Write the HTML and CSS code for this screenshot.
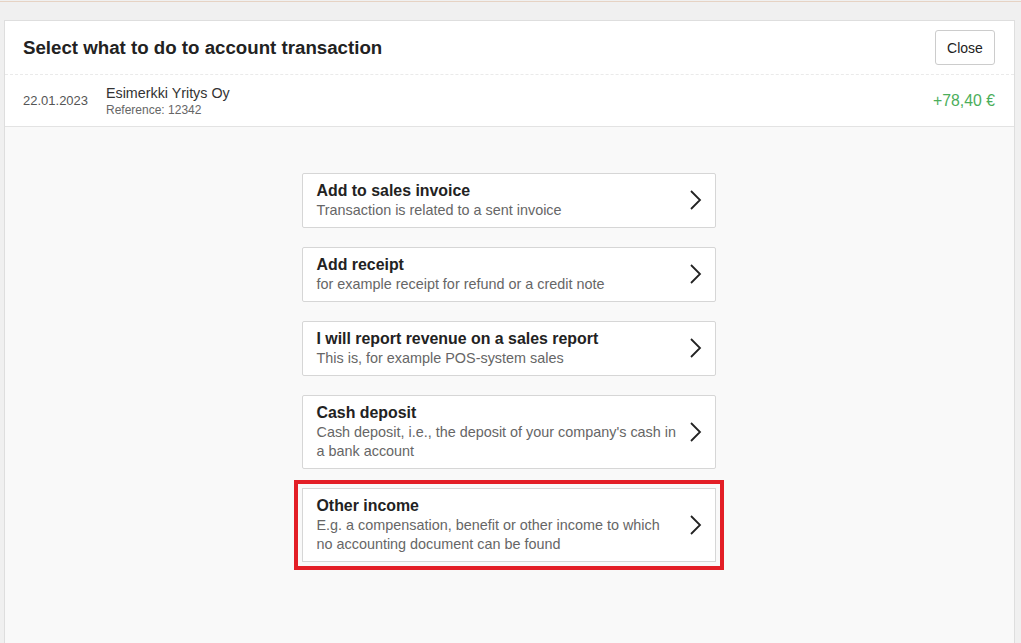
FILE: index.html
```html
<!DOCTYPE html>
<html lang="en">
<head>
    <meta charset="UTF-8">
    <title>Select what to do to account transaction</title>
    <meta name="viewport" content="width=device-width, initial-scale=1">
    <link rel="stylesheet" href="styles.css">
</head>
<body>
    <div class="topline"></div>
    <div class="modal">
        <div class="modal-header">
            <h1>Select what to do to account transaction</h1>
            <button class="close-btn">Close</button>
        </div>
        <div class="transaction">
            <div class="tx-date">22.01.2023</div>
            <div class="tx-info">
                <div class="tx-name">Esimerkki Yritys Oy</div>
                <div class="tx-ref">Reference: 12342</div>
            </div>
            <div class="tx-amount">+78,40 €</div>
        </div>
        <div class="modal-body">
            <div class="options">
                <a class="option" href="#">
                    <div class="option-text">
                        <div class="option-title">Add to sales invoice</div>
                        <div class="option-desc">Transaction is related to a sent invoice</div>
                    </div>
                    <svg class="chevron" width="14" height="22" viewBox="0 0 14 22"><path d="M2 2 L11 11 L2 20" fill="none" stroke="#222" stroke-width="1.8"/></svg>
                </a>
                <a class="option" href="#">
                    <div class="option-text">
                        <div class="option-title">Add receipt</div>
                        <div class="option-desc">for example receipt for refund or a credit note</div>
                    </div>
                    <svg class="chevron" width="14" height="22" viewBox="0 0 14 22"><path d="M2 2 L11 11 L2 20" fill="none" stroke="#222" stroke-width="1.8"/></svg>
                </a>
                <a class="option" href="#">
                    <div class="option-text">
                        <div class="option-title">I will report revenue on a sales report</div>
                        <div class="option-desc">This is, for example POS-system sales</div>
                    </div>
                    <svg class="chevron" width="14" height="22" viewBox="0 0 14 22"><path d="M2 2 L11 11 L2 20" fill="none" stroke="#222" stroke-width="1.8"/></svg>
                </a>
                <a class="option" href="#">
                    <div class="option-text">
                        <div class="option-title">Cash deposit</div>
                        <div class="option-desc">Cash deposit, i.e., the deposit of your company's cash in a bank account</div>
                    </div>
                    <svg class="chevron" width="14" height="22" viewBox="0 0 14 22"><path d="M2 2 L11 11 L2 20" fill="none" stroke="#222" stroke-width="1.8"/></svg>
                </a>
                <a class="option highlighted" href="#">
                    <div class="option-text">
                        <div class="option-title">Other income</div>
                        <div class="option-desc">E.g. a compensation, benefit or other income to which no accounting document can be found</div>
                    </div>
                    <svg class="chevron" width="14" height="22" viewBox="0 0 14 22"><path d="M2 2 L11 11 L2 20" fill="none" stroke="#222" stroke-width="1.8"/></svg>
                </a>
            </div>
        </div>
    </div>
</body>
</html>
```
FILE: styles.css
```css
body {
    font-family: "Liberation Sans", Arial, sans-serif;
    margin: 0;
    background: #f0f0f0;
    color: #222;
    height: 643px;
    overflow: hidden;
}

.topline {
    height: 1px;
    margin-top: 1px;
    background: #e6d3c4;
}

.modal {
    margin: 18px 6px 0 4px;
    background: #f9f9f9;
    border: 1px solid #dedede;
    border-bottom: none;
    height: 630px;
}

.modal-header {
    display: flex;
    align-items: center;
    justify-content: space-between;
    background: #fff;
    padding: 9px 19px 9px 18px;
    border-bottom: 1px dashed #eaeaea;
}

.modal-header h1 {
    margin: 0;
    font-size: 18.7px;
    font-weight: bold;
    color: #222;
}

.close-btn {
    font-family: inherit;
    font-size: 14px;
    color: #222;
    background: #fff;
    border: 1px solid #ccc;
    border-radius: 3px;
    width: 60px;
    height: 35px;
    padding: 0;
}

.transaction {
    display: flex;
    align-items: center;
    background: #fff;
    padding: 8px 19px 8px 18px;
    height: 35px;
    border-bottom: 1px solid #e3e3e3;
}

.tx-date {
    font-size: 13px;
    color: #555;
    width: 83px;
}

.tx-info {
    flex: 1;
}

.tx-name {
    font-size: 14.3px;
    color: #333;
    line-height: 18px;
}

.tx-ref {
    font-size: 12px;
    color: #666;
    line-height: 16px;
}

.tx-amount {
    font-size: 15.8px;
    color: #4cae5b;
}

.modal-body {
    display: flex;
    justify-content: center;
    padding-top: 46px;
}

.options {
    display: flex;
    flex-direction: column;
    gap: 19px;
    width: 414px;
    margin-right: 2px;
}

.option {
    display: flex;
    align-items: center;
    background: #fff;
    border: 1px solid #d6d6d6;
    border-radius: 2px;
    padding: 6px 12px 7px 14px;
    text-decoration: none;
    color: inherit;
}

.option-text {
    flex: 1;
    padding-right: 11px;
}

.option-title {
    font-size: 15.9px;
    font-weight: bold;
    color: #222;
    line-height: 21px;
}

.option-desc {
    font-size: 14.4px;
    color: #666;
    line-height: 19px;
}

.chevron {
    flex-shrink: 0;
}

.highlighted {
    border-radius: 0;
    outline: 4px solid #e31e26;
    outline-offset: 4px;
}
```
